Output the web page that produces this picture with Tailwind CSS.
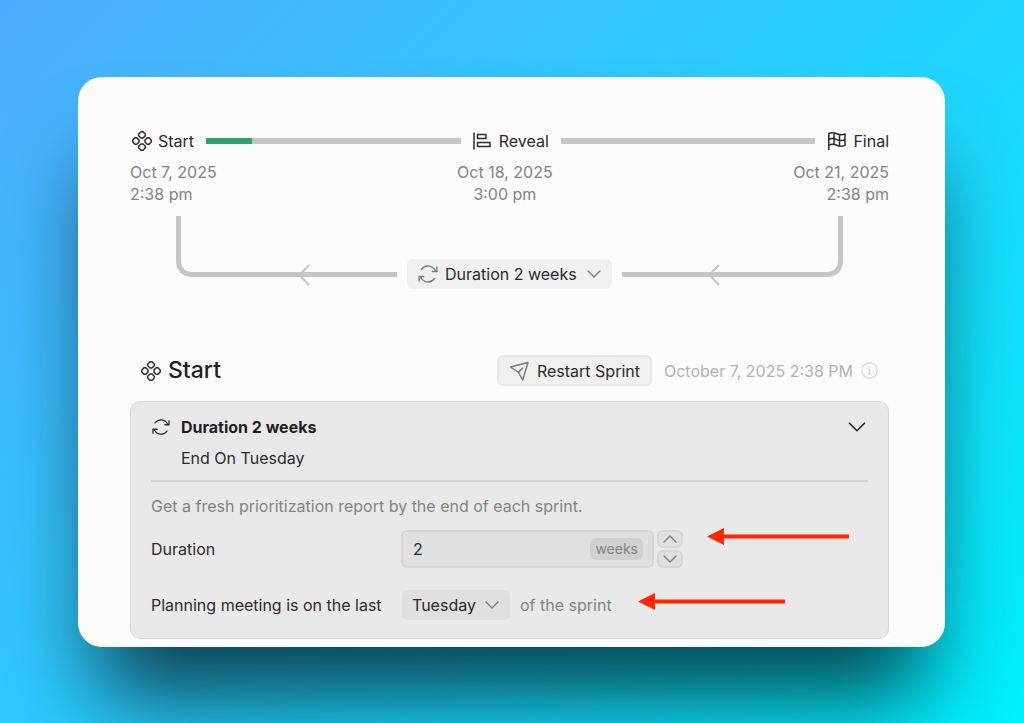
<!DOCTYPE html>
<html lang="en">
<head>
    <meta charset="UTF-8">
    <meta name="viewport" content="width=device-width, initial-scale=1.0">
    <title>Sprint schedule</title>
    <script src="https://cdn.jsdelivr.net/npm/@tailwindcss/browser@4"></script>
</head>
<body class="min-h-screen bg-[linear-gradient(135deg,#4facfe,#00f2fe)] pt-[77px] pb-[76px] pl-[78px] pr-[79px] font-['Inter','Liberation_Sans',sans-serif] text-base text-[#2b2b2b]">
    <!-- shared icons -->
    <svg class="hidden">
        <symbol id="icon-start" viewBox="0 0 20 20" fill="none" stroke="currentColor" stroke-width="1.5" stroke-linejoin="round">
            <path d="M9 .8h2l2.300 2.200v1.800L11 7H9L6.700 4.800V3zM9 13h2l2.300 2.200V17L11 19.200H9L6.700 17v-1.800zM3 6.700h1.800L7 9v2l-2.200 2.300H3L.8 11V9zM15.200 6.700H17L19.200 9v2L17 13.300h-1.800L13 11V9z"/>
        </symbol>
        <symbol id="icon-cycle" viewBox="0 0 20 20" fill="none" stroke="currentColor" stroke-width="1.4" stroke-linecap="round" stroke-linejoin="round">
            <path d="M3.300 5.500C7.300 .4 14.600 1 17.700 7.200M18.900 3v4.500h-4.600M16.700 14.500C12.700 19.600 5.400 19 2.300 12.800M1.100 17v-4.500h4.600"/>
        </symbol>
        <symbol id="icon-chevron" viewBox="0 0 16 16" fill="none" stroke="currentColor" stroke-linecap="round" stroke-linejoin="round">
            <path d="M2 5l6 6 6-6"/>
        </symbol>
    </svg>

    <main class="rounded-3xl bg-[#fcfcfc] pt-[53px] pb-2 pl-[52px] pr-14 shadow-[0_70px_90px_-20px_rgba(0,0,0,0.7)]">
        <!-- timeline -->
        <section>
            <div class="flex h-[22px] items-center">
                <svg class="mr-1.5 ml-0.5 size-5"><use href="#icon-start"/></svg>
                <span>Start</span>
                <div class="mx-3 h-1.5 flex-1 bg-[#c5c6c5]">
                    <div class="h-full bg-[#30a46c]" style="width: 18%"></div>
                </div>
                <svg class="mr-2 h-[18px] w-[18px]" viewBox="0 0 18 18" fill="none" stroke="currentColor" stroke-width="1.5" stroke-linejoin="round">
                    <path d="M1 .5v17M4.500 2.500h8.500v4H4.500zM4.500 10.500H17v4H4.500z"/>
                </svg>
                <span>Reveal</span>
                <div class="mx-3 h-1.5 flex-1 bg-[#c5c6c5]"></div>
                <svg class="mr-1.5 h-5 w-5" viewBox="0 0 20 20" fill="none" stroke="currentColor" stroke-width="1.5" stroke-linejoin="round">
                    <path d="M1.800 19V2.500c3.200-1.700 5.600-.8 8 .3s5 1.600 8.200 0v11.500c-3.200 1.600-5.800 1.100-8.200 0s-4.800-1.900-8-.2M1.800 8.300c3.200-1.700 5.600-.8 8 .3s5 1.600 8.200 0M7 1.800v11.500M12.500 3.600v11.500"/>
                </svg>
                <span>Final</span>
            </div>
            <div class="mt-[9px] flex justify-between leading-[22px] text-[#838383]">
                <p>Oct 7, 2025<br>2:38 pm</p>
                <p class="text-center">Oct 18, 2025<br>3:00 pm</p>
                <p class="text-right">Oct 21, 2025<br>2:38 pm</p>
            </div>
            <!-- loop back from the final date to the start -->
            <div class="mt-[11px] flex items-start gap-2.5 px-[46px]">
                <div class="relative h-[61px] flex-1 rounded-bl-[15px] border-b-[5px] border-l-[5px] border-[#c5c6c5]">
                    <svg class="absolute -bottom-3.5 left-[54%] h-[22px] w-3 text-[#c5c6c5]" viewBox="0 0 12 22" fill="none" stroke="currentColor" stroke-width="2"><path d="M11 1L1.500 11 11 21"/></svg>
                </div>
                <div class="relative mt-[43px] text-[#7c7c7c]">
                    <svg class="pointer-events-none absolute top-[5px] left-[11px] size-5"><use href="#icon-cycle"/></svg>
                    <select aria-label="Sprint duration" class="h-[30px] w-[205px] appearance-none rounded-md bg-[#f0f0f0] pl-[38px] text-[#2b2b2b]">
                        <option>Duration 2 weeks</option>
                    </select>
                    <svg class="pointer-events-none absolute top-[7px] right-2.5 size-4 stroke-[1.4]"><use href="#icon-chevron"/></svg>
                </div>
                <div class="relative h-[61px] flex-1 rounded-br-[15px] border-r-[5px] border-b-[5px] border-[#c5c6c5]">
                    <svg class="absolute -bottom-3.5 left-[40%] h-[22px] w-3 text-[#c5c6c5]" viewBox="0 0 12 22" fill="none" stroke="currentColor" stroke-width="2"><path d="M11 1L1.500 11 11 21"/></svg>
                </div>
            </div>
        </section>

        <section class="mt-[66px]">
            <div class="flex h-[31px] items-center px-[11px]">
                <svg class="mr-[7px] size-5"><use href="#icon-start"/></svg>
                <h2 class="text-[23px] font-medium text-[#1f1f1f]">Start</h2>
                <button type="button" class="ml-auto flex h-[31px] items-center gap-2 rounded-md border-2 border-[#e8e8e8] bg-[#f0f0f0] px-2.5">
                    <svg class="size-5 text-[#7c7c7c]" viewBox="0 0 20 20" fill="none" stroke="currentColor" stroke-width="1.500" stroke-linejoin="round" stroke-linecap="round">
                        <path d="M1.500 6L19 1.500 13.700 19 9.500 11.500zM9.500 11.500l4-4.500"/>
                    </svg>
                    Restart Sprint
                </button>
                <span class="mr-2 ml-3 text-[#b2b3b2]">October 7, 2025 2:38 PM</span>
                <svg class="size-[17px] text-[#d5d6d5]" viewBox="0 0 17 17" fill="none" stroke="currentColor" stroke-width="1.300">
                    <circle cx="8.500" cy="8.500" r="7.700"/><path d="M7 7.500h1.700V12M6.800 12h3.600M8.500 4.300v1.500"/>
                </svg>
            </div>

            <div class="mt-[15px] rounded-[10px] border border-[#d8dada] bg-[#e9e9e9] px-5 pt-3.5 pb-[18px]">
                <div class="flex h-[22px] items-center">
                    <svg class="mr-[11px] ml-px size-[18px]"><use href="#icon-cycle"/></svg>
                    <h3 class="font-bold text-[#1f1f1f]">Duration 2 weeks</h3>
                    <button type="button" aria-label="Collapse" class="ml-auto">
                        <svg class="mr-px size-5 stroke-[1.4]"><use href="#icon-chevron"/></svg>
                    </button>
                </div>
                <p class="mt-[9px] pl-[30px] leading-[22px]">End On Tuesday</p>
                <hr class="mt-[11px] border-t-2 border-[#d2d3d2]">
                <p class="mt-[13px] leading-[22px] text-[#838383]">Get a fresh prioritization report by the end of each sprint.</p>

                <div class="relative mt-[13px] flex h-[38px] items-center">
                    <label for="duration" class="w-[250px]">Duration</label>
                    <div class="relative">
                        <input id="duration" type="text" value="2" class="h-[38px] w-[253px] rounded-md border-2 border-[#d6d6d6] bg-[#e0e0e0] pr-20 pl-2.5">
                        <span class="absolute top-2 right-[11px] h-[22px] rounded-md bg-[#d1d1d1] px-[5px] text-sm leading-[22px] text-[#838383]">weeks</span>
                    </div>
                    <div class="ml-[3px] flex flex-col gap-0.5 text-[#7c7c7c]">
                        <button type="button" aria-label="Increase" class="flex h-[18px] w-[26px] items-center justify-center rounded-md border-2 border-[#d6d6d6] bg-[#e0e0e0]">
                            <svg class="size-4 rotate-180 stroke-[1.4]"><use href="#icon-chevron"/></svg>
                        </button>
                        <button type="button" aria-label="Decrease" class="flex h-[18px] w-[26px] items-center justify-center rounded-md border-2 border-[#d6d6d6] bg-[#e0e0e0]">
                            <svg class="size-4 stroke-[1.4]"><use href="#icon-chevron"/></svg>
                        </button>
                    </div>
                    <svg class="absolute -top-0.5 left-[556px] h-[17px] w-[142px]" viewBox="0 0 142 17" fill="#ff2600"><path d="M0 8.500L17 0v6.500h125v4H17V17z"/></svg>
                </div>

                <div class="relative mt-[22px] flex h-[30px] items-center">
                    <label for="weekday" class="w-[251px]">Planning meeting is on the last</label>
                    <div class="relative text-[#7c7c7c]">
                        <select id="weekday" class="h-[30px] w-[108px] appearance-none rounded-md bg-[#e0e0e0] pl-2.5 text-[#2b2b2b]">
                            <option>Tuesday</option>
                        </select>
                        <svg class="pointer-events-none absolute top-[7px] right-2.5 size-4 stroke-[1.4]"><use href="#icon-chevron"/></svg>
                    </div>
                    <span class="ml-2.5 text-[#838383]">of the sprint</span>
                    <svg class="absolute top-[3px] left-[487px] h-[17px] w-[147px]" viewBox="0 0 147 17" fill="#ff2600"><path d="M0 8.500L17 0v6.500h130v4H17V17z"/></svg>
                </div>
            </div>
        </section>
    </main>
</body>
</html>
